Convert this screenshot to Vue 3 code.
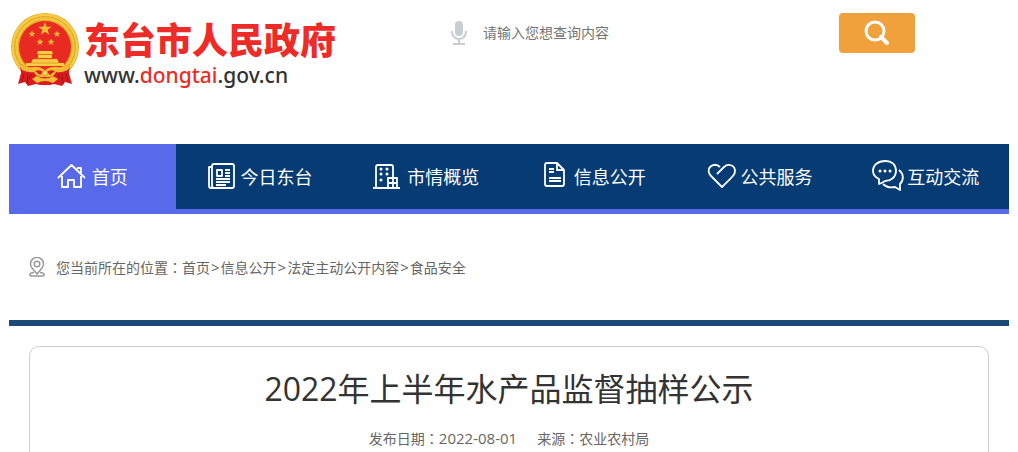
<template>
  <div class="page">
    <header class="header">
      <a class="logo" href="#">
        <svg class="emblem" viewBox="0 0 70 74" aria-hidden="true">
          <circle cx="35" cy="34" r="34" fill="#e5ab24" />
          <circle cx="35" cy="34" r="32" fill="none" stroke="#f5cd48" stroke-width="2.4" />
          <circle cx="35" cy="34" r="28.6" fill="none" stroke="#f3c63f" stroke-width="2.6" />
          <circle cx="35" cy="34" r="30.3" fill="none" stroke="#dca024" stroke-width=".8" stroke-dasharray="3 1.5" />
          <circle cx="35" cy="34" r="26" fill="#e92a22" />
          <polygon v-for="(s, i) in stars" :key="i" :points="starPoints(s)" fill="#f3bd38" />
          <path d="M27 41L28 38H42L43 41ZM28 42H42V45H28ZM23 46H47L49 50H21ZM16 50H54V53H16Z" fill="#f8cc45" />
          <path d="M28 41.5H42M24 46H46M21 50H49" stroke="#dd8e1c" stroke-width=".7" fill="none" />
          <path d="M10 51L21 56L28 60H42L49 56L60 51L59 60L62 71L55 69L52 73L44 71L40 72H30L26 71L18 73L15 69L8 71L11 60Z" fill="#dc1b1f" />
          <path d="M8 50Q16 55 23 54Q29 53 35 57Q41 53 47 54Q54 55 62 50L58 57Q51 60 46 59Q44 65 35 64Q26 65 24 59Q19 60 12 57Z" fill="#f1bb33" />
          <path d="M25 58Q30 56 33 59L30 62ZM45 58Q40 56 37 59L40 62Z" fill="#dc1b1f" />
          <circle cx="35" cy="60" r="2.6" fill="#fbdb68" stroke="#d88a1b" stroke-width=".8" />
          <path d="M22 66L27 63Q35 68 43 63L48 66L43 70Q35 66 27 70Z" fill="#f3be36" />
          <path d="M14 60L12 69M18 61L17 71M22 61L19 66M56 60L58 69M52 61L53 71M48 61L51 66" stroke="#a30f15" fill="none" />
        </svg>
        <span class="logo-text">
          <span class="logo-name">东台市人民政府</span>
          <span class="logo-url">www.<em>dongtai</em>.gov.cn</span>
        </span>
      </a>
      <form class="search" @submit.prevent>
        <svg class="mic" viewBox="0 0 16 24" aria-hidden="true">
          <rect x="4" y="0" width="8" height="15" rx="4" fill="#cbcdd0" />
          <path d="M1 10V11A7 7 0 0 0 15 11V10M8 18V23M2 23H14" fill="none" stroke="#cbcdd0" stroke-width="2" />
        </svg>
        <input v-model="keyword" type="text" placeholder="请输入您想查询内容" aria-label="请输入您想查询内容" />
        <button type="submit" aria-label="搜索">
          <svg viewBox="0 0 26 26" aria-hidden="true">
            <circle cx="11" cy="11" r="9" fill="none" stroke="#fff" stroke-width="3" />
            <path d="M17 17L23 23" stroke="#fff" stroke-width="4" stroke-linecap="round" />
          </svg>
        </button>
      </form>
    </header>

    <nav class="nav">
      <a v-for="item in navItems" :key="item.text" href="#" :class="{ active: item.text === current }">
        <svg viewBox="0 0 32 32" aria-hidden="true">
          <path :d="item.icon" />
          <path v-if="item.dots" class="dots" :d="item.dots" />
        </svg>
        <span>{{ item.text }}</span>
      </a>
    </nav>

    <div class="crumbs">
      <svg viewBox="0 0 16 20" aria-hidden="true">
        <path d="M8 17L3 11A6.5 6.5 0 1 1 13 11ZM5 15.5C-1 16 0 19 4 19H12C16 19 17 16 11 15.5" />
        <circle cx="8" cy="7" r="2.8" />
      </svg>
      <div>
        <span>您当前所在的位置<i class="colon">：</i></span>
        <template v-for="(c, i) in crumbs" :key="c"><span v-if="i" class="sep">&gt;</span><a href="#">{{ c }}</a></template>
      </div>
    </div>

    <main class="content">
      <article class="article">
        <h1>2022年上半年水产品监督抽样公示</h1>
        <p class="meta">
          <span>发布日期<i class="colon">：</i><time>2022-08-01</time></span>
          <span>来源<i class="colon">：</i>农业农村局</span>
        </p>
      </article>
    </main>
  </div>
</template>

<script setup>
import { ref } from 'vue';

const keyword = ref('');
const current = '首页';
const crumbs = ['首页', '信息公开', '法定主动公开内容', '食品安全'];

const navItems = [
  {
    text: '首页',
    icon: 'M1 17L14.5 4L28 17M5 15V26H11V19H17V26H24V15M20 7H24V12'
  },
  {
    text: '今日东台',
    icon: 'M8 3H26Q28 3 28 5V25Q28 27 26 27H5Q3 27 3 25V6H6M6 5V25Q6 27 8 27M6 5Q6 3 8 3M11 9H16V15H11ZM19 9H24M19 12H24M19 15H24M10 18H24M10 21H24M10 24H20'
  },
  {
    text: '市情概览',
    icon: 'M1 27H28M4 27V6Q4 4 6 4H19Q21 4 21 6V17M16 27V17H25V27M16 22H25M21 17V27',
    dots: 'M9 8H9.01M15 8H15.01M9 13H9.01M15 13H15.01M9 19H9.01'
  },
  {
    text: '信息公开',
    icon: 'M18 2H8Q6 2 6 4V23Q6 25 8 25H23Q25 25 25 23V9ZM18 2V9H25M10 8H15M10 11H15M10 17H22M10 20H22'
  },
  {
    text: '公共服务',
    icon: 'M11 13L18 6C22 2 29 4 29 10C29 14 26 16 16 26L5 15C2 12 2 8 4 6C7 3 11 3 14 6'
  },
  {
    text: '互动交流',
    icon: 'M7 23V18C3 16 1 13 1 10C1 4 6 0 13 0C20 0 24 4 24 10C24 16 19 20 13 20Q10 22 7 23ZM27 9C32 13 32 19 28 23L28 29L23 26C18 27 14 26 11 23',
    dots: 'M8 10H8.01M13 10H13.01M18 10H18.01'
  }
];

// [cx, cy, radius]
const stars = [
  [35, 16, 7],
  [22, 21, 3.6],
  [47, 21, 3.6],
  [30, 29, 3.6],
  [41, 29, 3.6]
];

function starPoints([cx, cy, r]) {
  return Array.from({ length: 10 }, (_, i) => {
    const len = i % 2 ? r * 0.4 : r;
    const a = (Math.PI / 5) * i - Math.PI / 2;
    return `${cx + len * Math.cos(a)},${cy + len * Math.sin(a)}`;
  }).join(' ');
}
</script>

<style>
body {
  margin: 0;
  background: #fff;
}
</style>

<style scoped>
.page {
  margin: 0 9px;
  font-family: "Open Sans", "Noto Sans CJK SC", sans-serif;
  font-size: 14px;
  line-height: 20px;
  color: #666;
}
a {
  color: inherit;
  text-decoration: none;
}
.header {
  display: flex;
  justify-content: space-between;
  align-items: flex-start;
  box-sizing: border-box;
  min-height: 144px;
  padding: 13px 94px 0 1px;
}
.logo {
  display: flex;
  gap: 4px;
}
.emblem {
  width: 70px;
  height: 74px;
}
.logo-text {
  display: flex;
  flex-direction: column;
  padding-top: 8px;
  white-space: nowrap;
}
.logo-name {
  font-family: "Liberation Sans", "Noto Sans CJK SC", sans-serif;
  font-size: 36px;
  font-weight: 900;
  line-height: 42px;
  color: #ee2c27;
}
.logo-url {
  font-family: "Noto Sans", sans-serif;
  font-size: 21px;
  font-weight: 500;
  line-height: 24px;
  color: #333;
}
.logo-url em {
  font-style: normal;
  color: #ee2c27;
}
.search {
  display: flex;
  align-items: center;
  width: 464px;
}
.mic {
  width: 16px;
  height: 24px;
}
.search input {
  flex: 1;
  min-width: 0;
  height: 40px;
  padding: 0 16px 2px;
  border: none;
  outline: none;
  box-sizing: border-box;
  font: inherit;
  color: #333;
}
.search input::placeholder {
  color: #757575;
}
.search button {
  display: flex;
  align-items: center;
  justify-content: center;
  width: 76px;
  height: 40px;
  padding: 0;
  border: none;
  border-radius: 4px;
  background: #f0a13c;
  cursor: pointer;
}
.search button svg {
  width: 26px;
  height: 26px;
}
.nav {
  display: flex;
  background: #073b74;
  border-bottom: 5px solid #5869ea;
}
.nav a {
  flex: 1;
  display: flex;
  align-items: center;
  justify-content: center;
  gap: 3px;
  height: 65px;
  font-size: 18px;
  color: #fff;
  white-space: nowrap;
}
.nav a.active {
  background: #5869ea;
  margin-bottom: -5px;
  padding-bottom: 5px;
  box-sizing: border-box;
  height: 70px;
}
.nav svg {
  width: 32px;
  height: 32px;
  overflow: visible;
  fill: none;
  stroke: #fff;
  stroke-width: 1.8;
  stroke-linejoin: round;
}
.nav .dots {
  stroke-width: 3;
  stroke-linecap: round;
}
.crumbs {
  display: flex;
  align-items: center;
  height: 106px;
  padding-left: 20px;
}
.crumbs svg {
  width: 16px;
  height: 20px;
  margin-right: 11px;
  fill: none;
  stroke: #999;
  stroke-width: 1.5;
}
.crumbs div {
  display: flex;
  align-items: baseline;
}
.sep {
  padding: 0 1px;
  font-size: 15px;
}
.colon {
  font-family: "Noto Sans CJK TC", sans-serif;
  font-style: normal;
}
.content {
  padding: 20px 20px 0;
  border-top: 6px solid #1c4a78;
}
.article {
  padding: 20px 20px 40px;
  border: 1px solid #ccc;
  border-radius: 10px;
  text-align: center;
}
h1 {
  margin: 0;
  font-size: 32px;
  font-weight: 400;
  line-height: 44px;
  color: #333;
}
.meta {
  display: flex;
  justify-content: center;
  gap: 20px;
  margin: 17px 0 0;
}
.meta time {
  font-size: 15px;
}
</style>
